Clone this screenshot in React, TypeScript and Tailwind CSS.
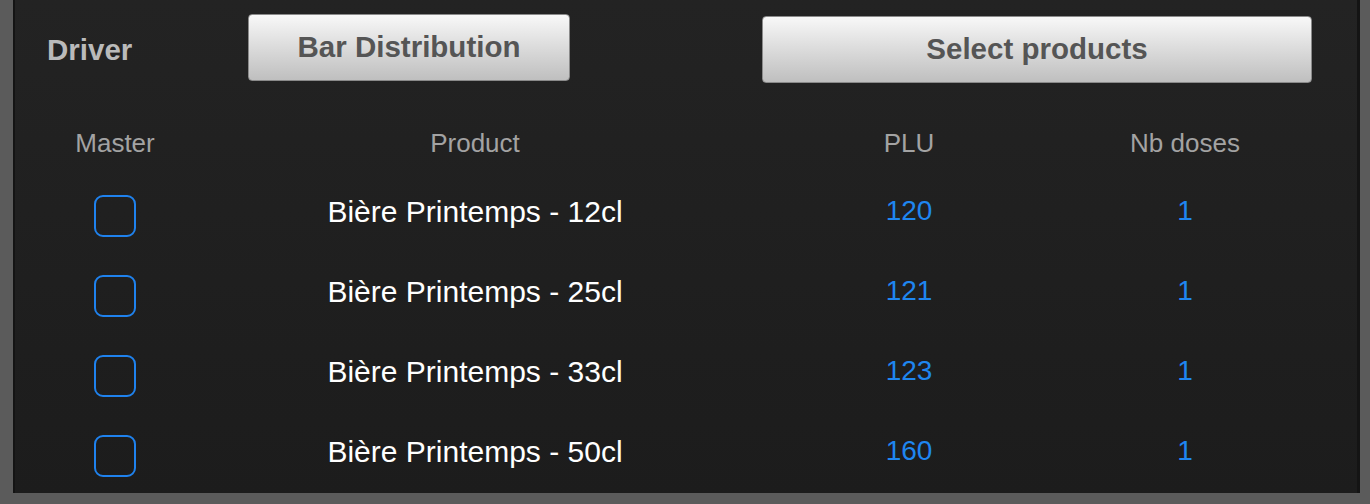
import React from "react";

interface Row {
  product: string;
  plu: string;
  doses: string;
}

const rows: Row[] = [
  { product: "Bière Printemps - 12cl", plu: "120", doses: "1" },
  { product: "Bière Printemps - 25cl", plu: "121", doses: "1" },
  { product: "Bière Printemps - 33cl", plu: "123", doses: "1" },
  { product: "Bière Printemps - 50cl", plu: "160", doses: "1" },
];

const cols = "grid grid-cols-[200px_520px_348px_204px]";

function GrayButton({ label, className }: { label: string; className: string }) {
  return (
    <button
      className={`flex h-[67px] items-center justify-center rounded-[4px] border border-[#8a8a8a] bg-gradient-to-b from-[#f8f8f8] to-[#bfbfbf] text-[29.5px] font-bold text-[#555555] ${className}`}
    >
      {label}
    </button>
  );
}

export default function App() {
  return (
    <div
      className="flex h-[504px] w-[1370px] flex-col bg-[#5b5b5b] pb-[14px] pl-[13px] pr-[10px]"
      style={{ fontFamily: '"Liberation Sans", Arial, sans-serif' }}
    >
      <div className="flex-1 border-l-2 border-r-[3px] border-l-[#141414] border-r-[#141414] bg-gradient-to-b from-[#232323] to-[#1c1c1c]">
        <div className="flex h-[83px] items-start">
          <div className="flex h-[81px] w-[233px] shrink-0 items-center pl-[32px] pt-[20px]">
            <span className="text-[29.5px] font-bold text-[#bababa]">Driver</span>
          </div>
          <GrayButton label="Bar Distribution" className="mt-[14px] w-[322px] shrink-0" />
          <GrayButton label="Select products" className="ml-[192px] mt-[16px] w-[550px] shrink-0" />
        </div>

        <div className="mt-[30px]">
          <div className={`${cols} h-[60px] items-center text-center text-[26px] text-[#a3a3a3]`}>
            <span>Master</span>
            <span>Product</span>
            <span>PLU</span>
            <span>Nb doses</span>
          </div>
          {rows.map((r) => (
            <div key={r.product} className={`${cols} h-[80px] items-center text-center`}>
              <div className="flex justify-center pt-[6px]">
                <div className="h-[42px] w-[42px] rounded-[9px] border-2 border-[#1f82ee]" />
              </div>
              <span className="pb-[4px] text-[30px] text-white">{r.product}</span>
              <span className="pb-[4px] text-[28px] text-[#1f86f0]">{r.plu}</span>
              <span className="pb-[4px] text-[28px] text-[#1f86f0]">{r.doses}</span>
            </div>
          ))}
        </div>
      </div>
    </div>
  );
}
